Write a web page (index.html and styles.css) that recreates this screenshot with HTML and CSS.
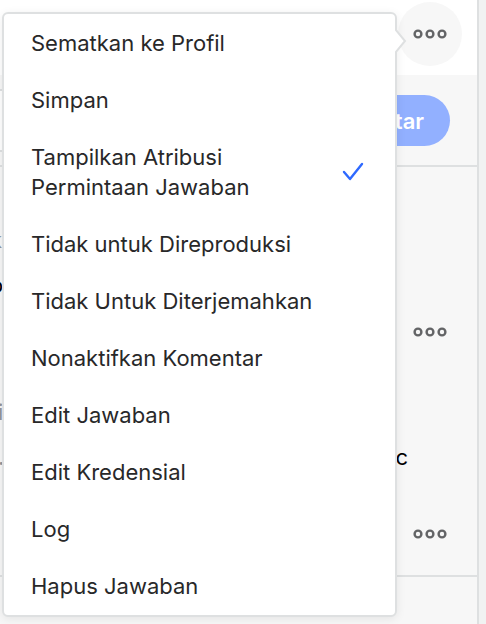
FILE: index.html
```html
<!DOCTYPE html>
<html lang="id">
  <head>
    <meta charset="utf-8">
    <title>Jawaban</title>
    <link rel="stylesheet" href="styles.css">
  </head>
  <body>
    <svg class="sprite" aria-hidden="true">
      <symbol id="dots" viewBox="0 0 34 10">
        <g fill="none" stroke="#636466" stroke-width="2.4">
          <circle cx="5" cy="5" r="3.4" />
          <circle cx="17" cy="5" r="3.4" />
          <circle cx="29" cy="5" r="3.4" />
        </g>
      </symbol>
    </svg>

    <main class="feed">
      <header class="actions">
        <button class="more active" aria-label="Lainnya">
          <svg class="dots"><use href="#dots" /></svg>
        </button>
      </header>

      <div class="comment-form">
        <input class="comment-input" type="text" aria-label="Komentar">
        <button class="submit">Komentar</button>
      </div>

      <article class="comment">
        <div class="meta"><span>k</span></div>
        <div class="text"><span>o</span></div>
        <div class="footer">
          <button class="more" aria-label="Lainnya">
            <svg class="dots"><use href="#dots" /></svg>
          </button>
        </div>
        <div class="meta reply"><span class="narrow">i</span></div>
        <div class="text"><span class="narrow dot">.</span><span class="end">c</span></div>
        <div class="footer last">
          <button class="more" aria-label="Lainnya">
            <svg class="dots"><use href="#dots" /></svg>
          </button>
        </div>
      </article>
    </main>

    <div class="menu">
      <svg class="arrow" viewBox="0 0 12 26" aria-hidden="true">
        <path d="M0 1 L10 13 L0 25" fill="#fff" stroke="#dee0e1" stroke-width="2" />
      </svg>
      <button class="item">Sematkan ke Profil</button>
      <button class="item">Simpan</button>
      <button class="item">
        <span class="label">Tampilkan Atribusi Permintaan Jawaban</span>
        <svg class="check" viewBox="0 0 22 20" aria-hidden="true">
          <path d="M2 10 L8 17 L20 2" fill="none" stroke="#2e69ff" stroke-width="2.4" stroke-linecap="round" stroke-linejoin="round" />
        </svg>
      </button>
      <button class="item">Tidak untuk Direproduksi</button>
      <button class="item">Tidak Untuk Diterjemahkan</button>
      <button class="item">Nonaktifkan Komentar</button>
      <button class="item">Edit Jawaban</button>
      <button class="item">Edit Kredensial</button>
      <button class="item">Log</button>
      <button class="item">Hapus Jawaban</button>
    </div>
  </body>
</html>
```

FILE: styles.css
```css
* {
  box-sizing: border-box;
}

body {
  margin: 0;
  padding-right: 7px;
  position: relative;
  overflow: hidden;
  background-color: #f1f2f2;
  font-family: Inter, "Liberation Sans", sans-serif;
  font-size: 22px;
  line-height: 30px;
  color: #282829;
}

button {
  border: none;
  padding: 0;
  background: none;
  font: inherit;
  color: inherit;
  cursor: pointer;
}

.sprite {
  display: none;
}

.feed {
  min-height: 100vh;
  border-right: 2px solid #dee0e1;
  background-color: #f7f7f7;
}

.actions {
  display: flex;
  justify-content: flex-end;
  padding: 2px 15px 9px;
  background-color: #fff;
}

.more {
  display: flex;
  align-items: center;
  justify-content: center;
  width: 64px;
  height: 64px;
}

.more.active {
  border-radius: 50%;
  background-color: #f7f7f7;
}

.dots {
  width: 34px;
  height: 10px;
}

.comment-form {
  display: flex;
  align-items: center;
  gap: 16px;
  padding: 14px 27px 13px 0;
  border-bottom: 2px solid #dee0e1;
}

.comment-input {
  flex: 1;
  min-width: 0;
  height: 63px;
  border: 2px solid #dee0e1;
  border-left: none;
  background-color: #fff;
}

.submit {
  height: 51px;
  padding: 0 26px;
  border-radius: 26px;
  background-color: #92b0ff;
  color: #fff;
  font-weight: 600;
}

.comment {
  padding-top: 58px;
  border-bottom: 2px solid #dee0e1;
}

.meta,
.text {
  display: flex;
  justify-content: space-between;
  height: 30px;
  margin-left: -10px;
}

.meta {
  margin-bottom: 15px;
  color: #939598;
}

.text {
  color: #000;
}

.narrow {
  margin-left: 8px;
}

.dot {
  color: #939598;
}

.end {
  margin-right: 69px;
}

.footer {
  display: flex;
  justify-content: flex-end;
  padding-right: 15px;
}

.reply {
  margin-top: 33px;
}

.last {
  padding-top: 30px;
  padding-bottom: 9px;
}

.menu {
  position: absolute;
  top: 12px;
  left: 2px;
  width: 395px;
  padding-top: 1px;
  border: 2px solid #dee0e1;
  border-radius: 6px;
  background-color: #fff;
  box-shadow: 0 2px 10px rgba(0, 0, 0, 0.08);
}

.arrow {
  position: absolute;
  top: 14px;
  right: -12px;
  width: 12px;
  height: 26px;
}

.item {
  display: flex;
  align-items: center;
  justify-content: space-between;
  width: 100%;
  padding: 13px 31px 14px 27px;
  text-align: left;
}

.label {
  max-width: 240px;
}

.check {
  width: 22px;
  height: 20px;
}
```
